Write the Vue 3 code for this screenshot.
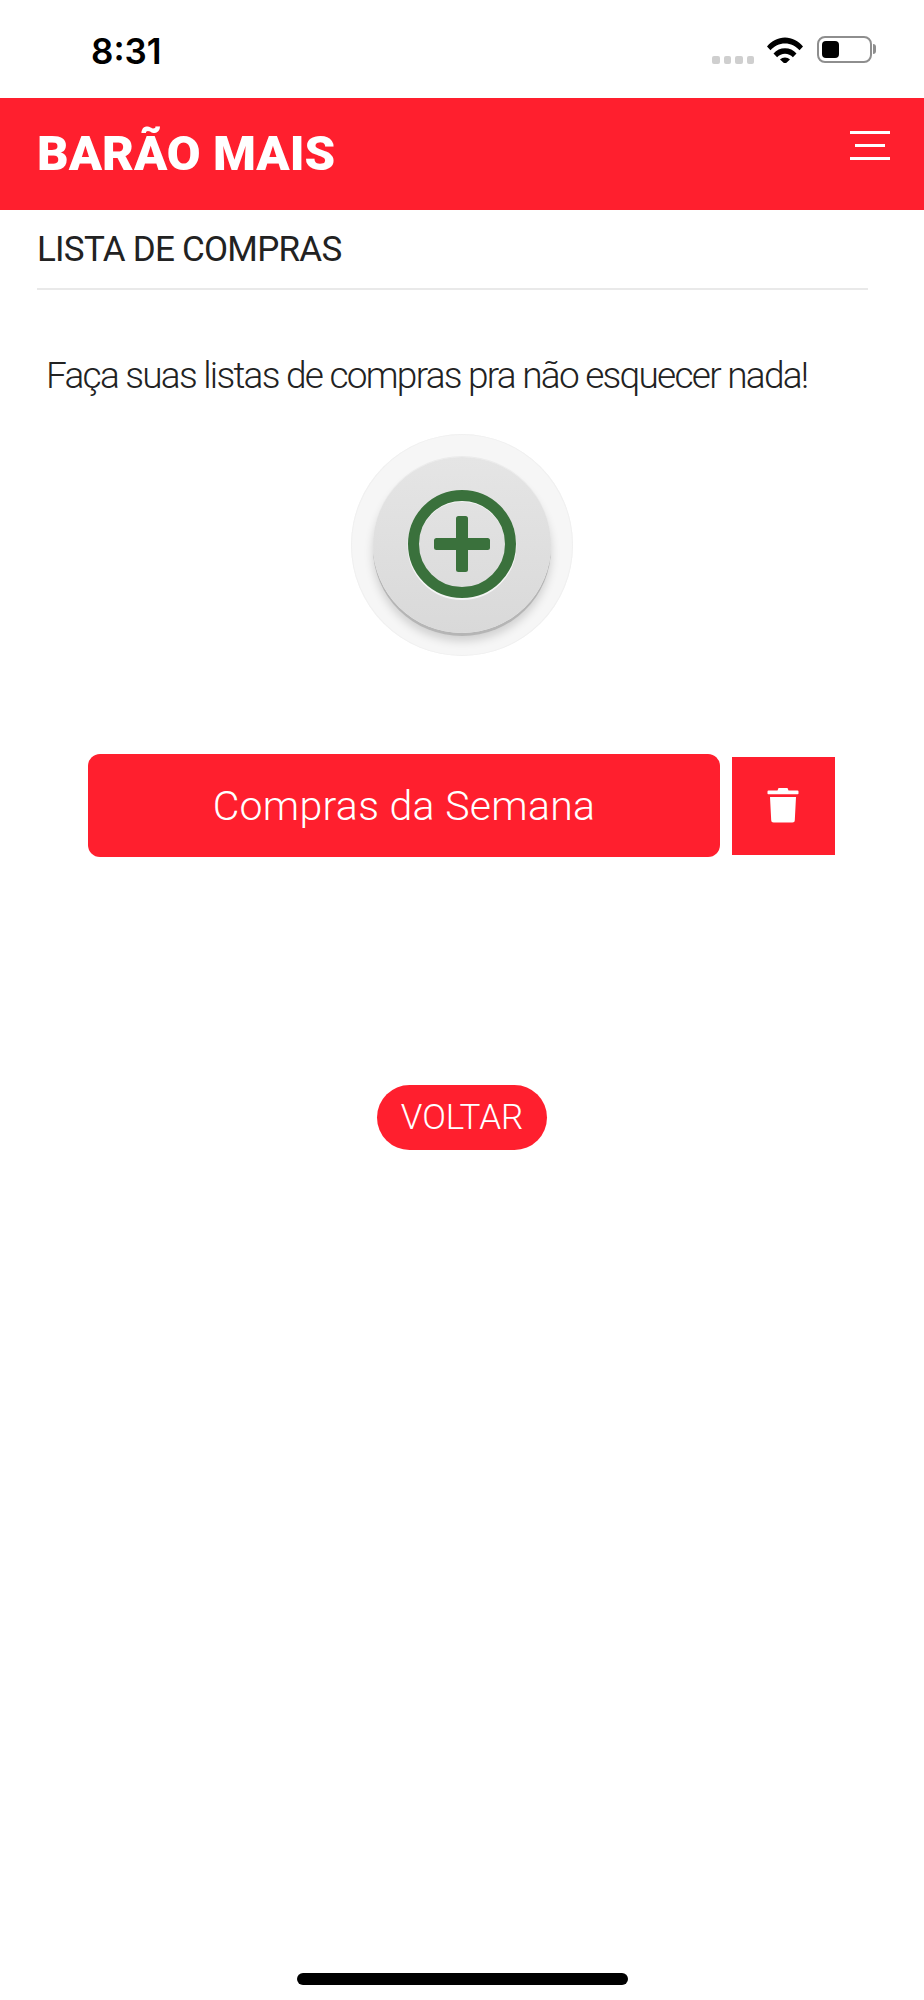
<script setup>
const dots = [1, 2, 3, 4]
</script>

<template>
  <div class="page">
    <div class="status">
      <span class="time">8:31</span>
      <div class="status-icons">
        <div class="dots"><i v-for="d in dots" :key="d"></i></div>
        <svg class="wifi" width="36" height="27" viewBox="0 0 36 27">
          <path d="M0 10.500C4.500 5 11 1.500 18 1.500s13.500 3.500 18 9l-3.500 3.800C28.800 10 23.700 7.500 18 7.500S7.200 10 3.500 14.300z" fill="#000"/>
          <path d="M6.500 17.500C9.500 14.200 13.500 12.300 18 12.300s8.500 1.900 11.500 5.200l-3.600 3.700C23.800 19 21 17.800 18 17.800s-5.800 1.200-7.900 3.400z" fill="#000"/>
          <path d="M13 23.500c1.300-1.300 3-2 5-2s3.700.7 5 2l-5 4.500z" fill="#000"/>
        </svg>
        <div class="battery"><div class="cell"></div><div class="nub"></div></div>
      </div>
    </div>

    <header class="bar">
      <h1 class="brand">BARÃO MAIS</h1>
      <div class="menu"><i class="long"></i><i class="short"></i><i class="long"></i></div>
    </header>

    <h2 class="section">LISTA DE COMPRAS</h2>
    <p class="lead">Faça suas listas de compras pra não esquecer nada!</p>

    <div class="add">
      <div class="knob">
        <svg width="110" height="110" viewBox="0 0 110 110">
          <circle cx="55" cy="55.500" r="49" fill="none" stroke="#fff" stroke-opacity=".7" stroke-width="11"/>
          <circle cx="55" cy="54" r="48.500" fill="none" stroke="#3a713c" stroke-width="11"/>
          <rect x="49" y="26" width="12" height="56" rx="2.500" fill="#3a713c"/>
          <rect x="27" y="48" width="56" height="12" rx="2.500" fill="#3a713c"/>
        </svg>
      </div>
    </div>

    <div class="row">
      <button class="list-btn">Compras da Semana</button>
      <button class="trash">
        <svg width="32" height="36" viewBox="0 0 32 36">
          <path d="M1.500 3.500h9l1-2.500h9l1 2.500h9a1 1 0 0 1 1 1V6.500a.800.800 0 0 1-.800.800H1.300a.800.800 0 0 1-.800-.800V4.500a1 1 0 0 1 1-1z" fill="#fff"/>
          <path d="M3 10h26l-1.200 23a2.500 2.500 0 0 1-2.500 2.500H6.700A2.500 2.500 0 0 1 4.200 33z" fill="#fff"/>
        </svg>
      </button>
    </div>

    <div class="back-wrap"><button class="back">VOLTAR</button></div>

    <div class="home"></div>
  </div>
</template>

<style>
html, body { margin: 0; background: #fff; }
</style>

<style scoped>
.page {
  width: 924px;
  height: 2000px;
  background: #fff;
  font-family: Roboto, "Liberation Sans", sans-serif;
  color: #222;
  display: flex;
  flex-direction: column;
  position: relative;
  overflow: hidden;
}
.status {
  height: 98px;
  display: flex;
  align-items: flex-start;
  justify-content: space-between;
  padding: 0 52px 0 91px;
  box-sizing: border-box;
}
.time {
  font-family: Inter, Roboto, sans-serif;
  font-size: 35px;
  font-weight: 600;
  line-height: 40px;
  margin-top: 31px;
  color: #000;
}
.status-icons {
  display: flex;
  align-items: flex-start;
  margin-top: 36px;
}
.dots {
  display: flex;
  gap: 4px;
  margin-top: 20px;
  margin-right: 13px;
}
.dots i {
  width: 7.500px;
  height: 7.500px;
  border-radius: 2px;
  background: #cfcfcf;
}
.wifi { margin-right: 14px; }
.battery {
  width: 55px;
  height: 27px;
  box-sizing: border-box;
  border: 2px solid #8e8e8e;
  border-radius: 8px;
  padding: 3px;
  position: relative;
}
.cell {
  width: 17px;
  height: 100%;
  background: #000;
  border-radius: 4px;
}
.nub {
  position: absolute;
  right: -6px;
  top: 6px;
  width: 3px;
  height: 10px;
  border-radius: 0 5px 5px 0;
  background: #8e8e8e;
}
.bar {
  height: 112px;
  background: #ff1f2e;
  display: flex;
  align-items: center;
  justify-content: space-between;
  padding: 0 34px 0 37px;
  color: #fff;
}
.brand {
  margin: 0;
  font-size: 49px;
  font-weight: 900;
  line-height: 56px;
  letter-spacing: 0;
}
.menu {
  display: flex;
  flex-direction: column;
  align-items: center;
  gap: 10px;
  width: 40px;
  margin-bottom: 17px;
}
.menu i { display: block; height: 3px; background: #fff; }
.menu .long { width: 40px; }
.menu .short { width: 30px; }
.section {
  margin: 0 56px 0 37px;
  height: 80px;
  box-sizing: border-box;
  border-bottom: 2px solid #e9e9e9;
  font-size: 35px;
  font-weight: 400;
  line-height: 79px;
  letter-spacing: -0.75px;
  color: #222;
}
.lead {
  margin: 64px 0 0 46px;
  font-size: 37px;
  font-weight: 300;
  line-height: 43px;
  letter-spacing: -1.74px;
  color: #222;
}
.add {
  align-self: center;
  margin-top: 37px;
  width: 222px;
  height: 222px;
  border-radius: 50%;
  background: #f6f6f6;
  box-shadow: inset 0 0 0 1px #f0f0f0;
  display: flex;
  align-items: center;
  justify-content: center;
}
.knob {
  width: 178px;
  height: 176px;
  border-radius: 50%;
  background: linear-gradient(#e5e5e5, #d9d9d9);
  box-shadow: 0 -1px 0 #ebebeb, 0 3px 0 #b5b5b5, 0 8px 10px rgba(0, 0, 0, .16);
  display: flex;
  align-items: center;
  justify-content: center;
}
.row {
  display: flex;
  align-items: center;
  margin: 98px 0 0 88px;
  gap: 12px;
}
.list-btn {
  width: 632px;
  height: 103px;
  border: 0;
  border-radius: 12px;
  background: #ff1f2e;
  color: #fff;
  font-family: Roboto, "Liberation Sans", sans-serif;
  font-size: 41px;
  font-weight: 300;
  letter-spacing: 0.3px;
  padding: 0;
}
.trash {
  width: 103px;
  height: 98px;
  border: 0;
  padding: 0 2px 1px 0;
  background: #ff1f2e;
  display: flex;
  align-items: center;
  justify-content: center;
}
.back-wrap {
  display: flex;
  justify-content: center;
  margin-top: 228px;
}
.back {
  width: 170px;
  height: 65px;
  border: 0;
  border-radius: 33px;
  background: #ff1f2e;
  color: #fff;
  font-family: Roboto, sans-serif;
  font-size: 35px;
  font-weight: 300;
  padding: 0;
}
.home {
  position: absolute;
  left: 297px;
  bottom: 15px;
  width: 331px;
  height: 12px;
  border-radius: 6px;
  background: #000;
}
</style>
